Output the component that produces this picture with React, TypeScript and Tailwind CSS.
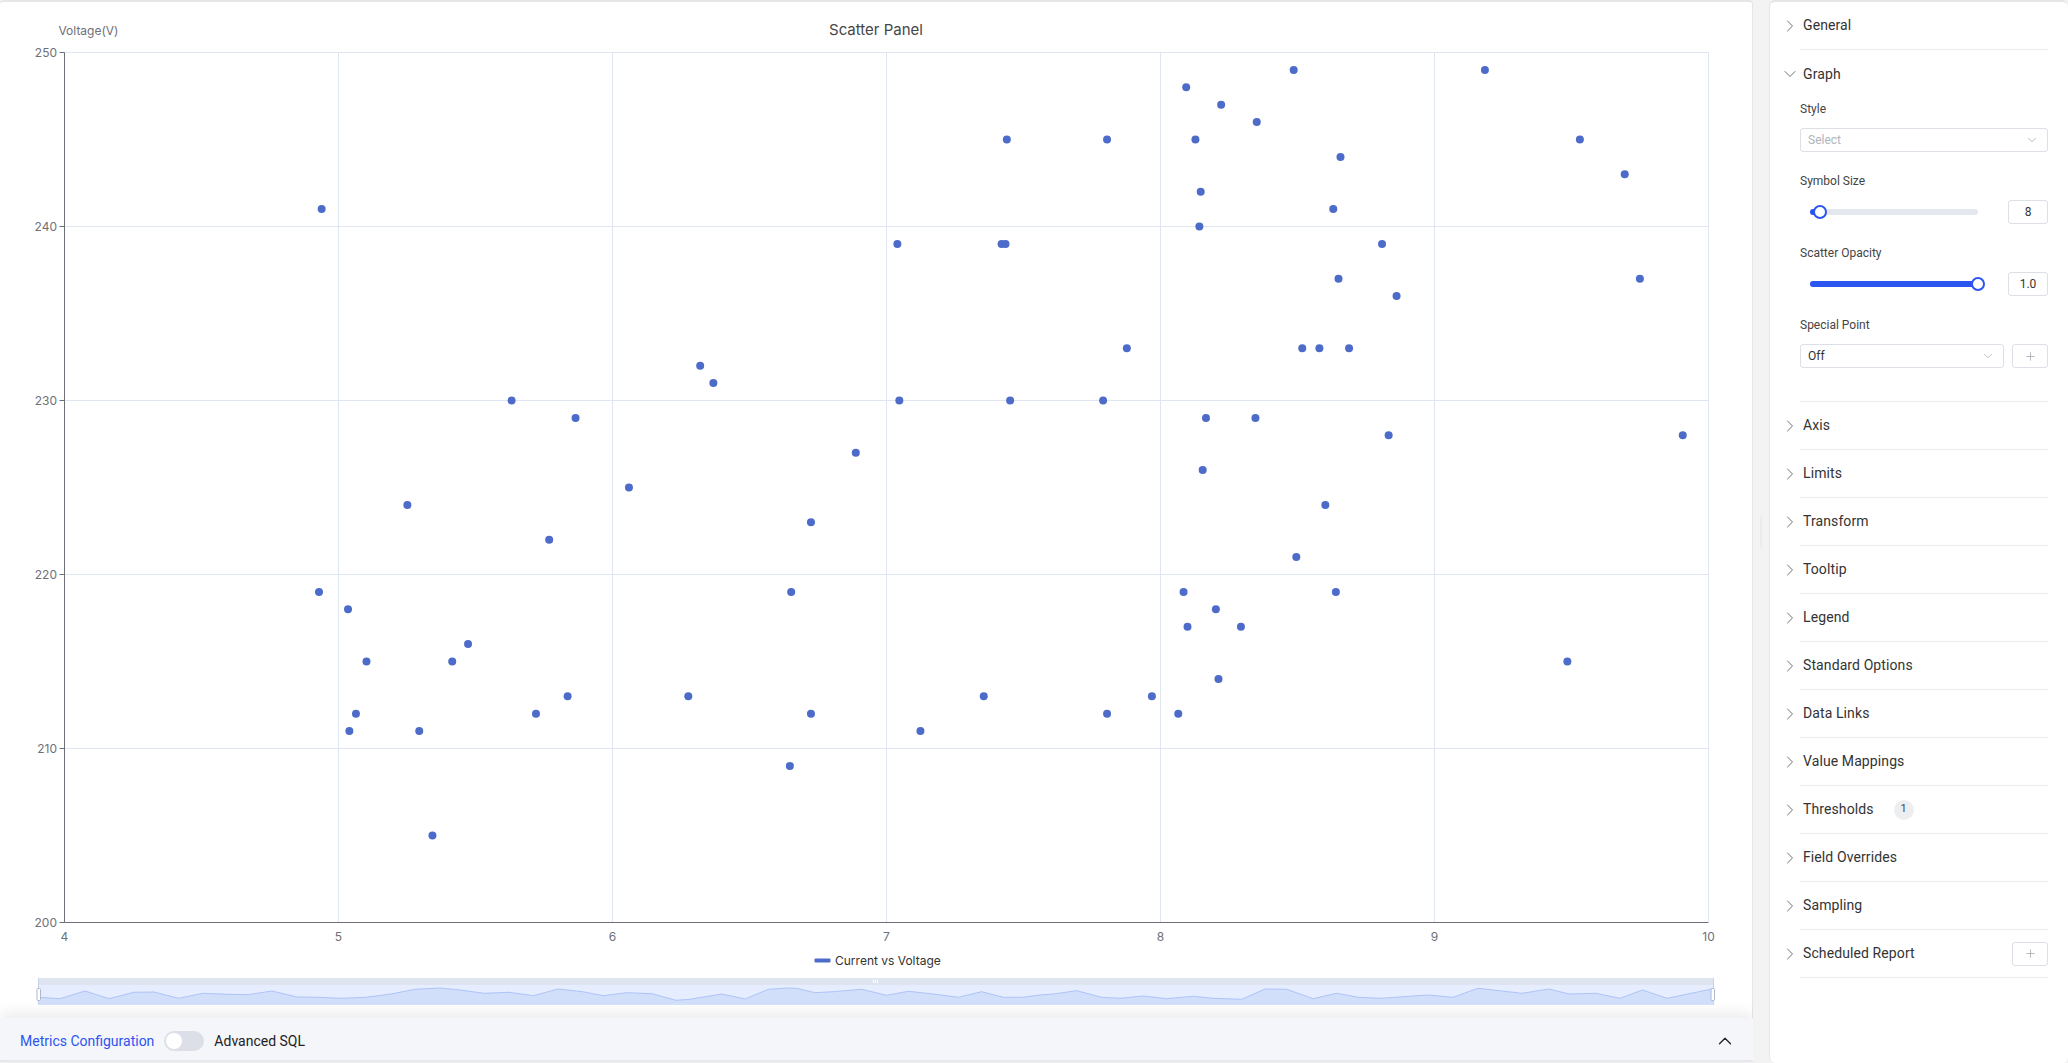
import { ChevronRight, ChevronDown, ChevronUp, Plus } from "lucide-react";

const points: [number, number][] = [
  [243.5,241],[241.5,219],[263.5,218],[277.5,215],[269.5,212],[264.5,211],[317.5,211],[327.5,205],[308.5,224],[342.5,215],
  [354.5,216],[387.5,230],[436,229],[416,222],[406,212],[430,213],[476.5,225],[530.5,232],[540.5,231],[521.5,213],
  [598.5,209],[599.5,219],[614.5,223],[614.5,212],[648.5,227],[680,239],[681.5,230],[697.5,211],[745.5,213],[759,239],
  [762,239],[763,245],[765.5,230],[839,245],[836,230],[839,212],[854,233],[873,213],[893,212],[897,219],
  [900,217],[899,248],[906,245],[925.5,247],[952.5,246],[910,242],[909,240],[914,229],[911.5,226],[921.5,218],
  [940.5,217],[923.5,214],[951.5,229],[980.5,249],[1016,244],[1010.5,241],[1047.5,239],[1014.5,237],[1058.5,236],[987,233],
  [1000,233],[1022.5,233],[1052.5,228],[1004.5,224],[982.5,221],[1012.5,219],[1125.5,249],[1197.5,245],[1231.5,243],[1243,237],
  [1275.5,228],[1188,215],
];

const miniLine =
  "39,997.3 60,998.7 85,991 109,998.7 134,992.3 154,992 178.6,998.3 203,993.3 228,994.3 248,994.7 272,991 297,997 317,997.3 341.5,998.3 366,997.3 391,994 415,989.3 440,988 460,990 484,993.3 509,992.3 533.5,995.7 558,989 582.6,991.7 603,995.7 627,992.7 652,993.7 676,1000.3 690,999.3 721.7,994 745,999 768.3,989.3 786.7,988 796.7,988.3 815,992.7 833.3,991.7 861.7,989.3 886.7,995.3 908.3,991.3 933.3,994 958.3,997.3 981.7,991.7 1003.3,997.3 1023.3,997.3 1040,995 1053.3,994 1076.7,990.7 1101.7,997.3 1120,998.3 1143.3,996 1166.7,998.7 1193.3,996.3 1213.3,998.3 1241.7,999.3 1265,989 1286.7,989.3 1313.3,998.7 1336.7,993.3 1358.3,997.3 1381,998.3 1428,995 1453,997.3 1478,988.3 1522,993.3 1549,989 1569,994 1596,993.3 1620,998.3 1642.5,990 1667,998.3 1712,989";

const L = 64.5;
const R = 1708.5;
const T = 52.5;
const B = 922.5;
const xTicks = [4, 5, 6, 7, 8, 9, 10];
const yTicks = [200, 210, 220, 230, 240, 250];
const xPos = (v: number) => L + ((v - 4) * (R - L)) / 6;
const yPos = (v: number) => B - (v - 200) * 17.4;
const crisp = (n: number) => Math.floor(n) + 0.5;

function Chart() {
  return (
    <svg viewBox="0 2 1752 1016" className="block w-[1752px] h-[1016px] [font-family:Inter,sans-serif]">
      <text x="118.5" y="35" textAnchor="end" className="text-[12px] fill-[#6e7079]">Voltage(V)</text>
      <text x="876" y="35" textAnchor="middle" className="text-[15px] fill-[#464646]">Scatter Panel</text>
      {xTicks.slice(1).map((v) => (
        <line key={v} x1={crisp(xPos(v))} x2={crisp(xPos(v))} y1={T} y2={B} stroke="#e0e6f1" strokeWidth="1" />
      ))}
      {yTicks.slice(1).map((v) => (
        <line key={v} x1={L} x2={R} y1={crisp(yPos(v))} y2={crisp(yPos(v))} stroke="#e0e6f1" strokeWidth="1" />
      ))}
      <line x1={L} x2={L} y1={T} y2={B} stroke="#6e7079" strokeWidth="1" />
      <line x1={L} x2={R} y1={B} y2={B} stroke="#6e7079" strokeWidth="1" />
      {yTicks.map((v) => (
        <g key={v}>
          <line x1={L - 5} x2={L} y1={crisp(yPos(v))} y2={crisp(yPos(v))} stroke="#6e7079" strokeWidth="1" />
          <text x={57} y={yPos(v) + 4.5} textAnchor="end" className="text-[12px] fill-[#6e7079]">{v}</text>
        </g>
      ))}
      {xTicks.map((v) => (
        <text key={v} x={xPos(v)} y={941} textAnchor="middle" className="text-[12px] fill-[#6e7079]">{v}</text>
      ))}
      {points.map(([x, v], i) => (
        <circle key={i} cx={x * 1.3189 + 0.5} cy={yPos(v)} r="4" fill="#4d6cc9" />
      ))}
      <rect x="814.5" y="958.5" width="16" height="4" rx="1" fill="#4d6cc9" />
      <text x="835" y="965" className="text-[12px] fill-[#333333]">Current vs Voltage</text>
      <rect x="38" y="978" width="1676" height="8" rx="2" fill="#dfe4f1" />
      <rect x="38" y="985" width="1676" height="19.7" fill="#e5edfe" />
      <polygon points={`38,1004.7 ${miniLine} 1714,1004.7`} fill="#d2dffa" />
      <polyline points={miniLine} fill="none" stroke="#aec4f8" strokeWidth="1" />
      <line x1="38.5" x2="38.5" y1="978" y2="1004.7" stroke="#c6d1ea" />
      <line x1="1713.5" x2="1713.5" y1="978" y2="1004.7" stroke="#c6d1ea" />
      <rect x="37" y="988.5" width="3.5" height="12" rx="1" fill="#ffffff" stroke="#acb8d1" />
      <rect x="1711" y="988.5" width="3.5" height="12" rx="1" fill="#ffffff" stroke="#acb8d1" />
      <path d="M873.5 979.5v3.5M875.5 979.5v3.5M877.5 979.5v3.5" stroke="#ffffff" strokeWidth="1" />
    </svg>
  );
}

function BottomBar() {
  return (
    <div className="relative z-10 flex h-[44px] items-center border-b-2 border-[#e7e8ec] bg-[#f5f6fa] pl-5 pr-[17px] pt-1 shadow-[0_-5px_14px_rgba(0,0,0,0.08)]">
      <span className="text-[14px] text-[#2b55ef]">Metrics Configuration</span>
      <div className="ml-[10px] flex h-5 w-10 items-center rounded-full bg-[#dcdfe7] pl-0.5">
        <div className="h-4 w-4 rounded-full bg-white" />
      </div>
      <span className="ml-[10px] text-[14px] text-[#222222]">Advanced SQL</span>
      <ChevronUp size={22} strokeWidth={1.4} className="ml-auto text-[#222222]" />
    </div>
  );
}

function PlusButton() {
  return (
    <div className="flex h-6 w-9 items-center justify-center rounded-[3px] border border-[#dcdfe6]">
      <Plus size={13} strokeWidth={1.5} className="text-[#a8abb2]" />
    </div>
  );
}

function Row({ label, badge, action }: { label: string; badge?: string; action?: boolean }) {
  return (
    <div className="flex">
      <div className="flex h-12 w-[30px] items-center justify-center pl-[10px]">
        <ChevronRight size={20} strokeWidth={1} className="text-[#555555]" />
      </div>
      <div className="flex h-12 flex-1 items-center border-b border-[#ebecef] pl-[3px]">
        <span className="text-[14px] tracking-[0.1px] text-[#333333]">{label}</span>
        {badge && (
          <span className="ml-[20px] flex h-5 w-5 items-center justify-center rounded-full bg-[#edeef2] text-[11px] text-[#444444]">{badge}</span>
        )}
        {action && (
          <div className="ml-auto">
            <PlusButton />
          </div>
        )}
      </div>
    </div>
  );
}

function Label({ children, className }: { children: string; className: string }) {
  return <div className={`text-[12px] leading-4 text-[#444444] ${className}`}>{children}</div>;
}

function Slider({ fill }: { fill: string }) {
  return (
    <div className="flex items-center">
      <div className="ml-[10px] flex h-1.5 w-[168px] items-center rounded-full bg-[#e5e7ee]">
        <div className={`flex h-1.5 items-center justify-end rounded-full bg-[#2b55ef] ${fill}`}>
          <div className="-mr-[7px] h-[14px] w-[14px] shrink-0 rounded-full border-2 border-[#2b55ef] bg-white" />
        </div>
      </div>
      <div className="ml-auto flex h-6 w-10 items-center justify-center rounded-[3px] border border-[#dcdfe6] text-[12px] text-[#333333]">
        {fill === "w-[10px]" ? "8" : "1.0"}
      </div>
    </div>
  );
}

function Select({ text, muted, className }: { text: string; muted?: boolean; className: string }) {
  return (
    <div className={`flex h-6 items-center rounded-[3px] border border-[#dcdfe6] pl-[7px] pr-[8px] ${className}`}>
      <span className={`text-[12px] ${muted ? "text-[#b0b4bd]" : "text-[#333333]"}`}>{text}</span>
      <ChevronDown size={14} strokeWidth={1} className="ml-auto text-[#8b8f98]" />
    </div>
  );
}

function GraphSection() {
  return (
    <div>
      <div className="flex h-12 items-center">
        <div className="flex w-[30px] justify-center pl-[10px]">
          <ChevronDown size={20} strokeWidth={1} className="text-[#555555]" />
        </div>
        <span className="pl-[3px] text-[14px] tracking-[0.1px] text-[#333333]">Graph</span>
      </div>
      <div className="ml-[30px] h-[304px] border-b border-[#ebecef] pt-[3px]">
        <Label className="">Style</Label>
        <Select text="Select" muted className="mt-[11px] w-full" />
        <Label className="mt-[21px]">Symbol Size</Label>
        <div className="mt-[11px]">
          <Slider fill="w-[10px]" />
        </div>
        <Label className="mt-[21px]">Scatter Opacity</Label>
        <div className="mt-[11px]">
          <Slider fill="w-full" />
        </div>
        <Label className="mt-[21px]">Special Point</Label>
        <div className="mt-[11px] flex justify-between">
          <Select text="Off" className="w-[204px]" />
          <PlusButton />
        </div>
      </div>
    </div>
  );
}

export default function App() {
  const rows = ["Axis", "Limits", "Transform", "Tooltip", "Legend", "Standard Options", "Data Links", "Value Mappings"];
  return (
    <div className="flex h-[1063px] w-[2068px] overflow-hidden bg-[#f3f3f3] [font-family:Roboto,sans-serif]">
      <div className="flex w-[1753px] shrink-0 flex-col overflow-hidden">
        <div className="flex-none overflow-hidden rounded-t-[4px] border-t-2 border-r border-[#e6e6e6] bg-white">
          <Chart />
        </div>
        <BottomBar />
      </div>
      <div className="flex w-4 shrink-0 items-start justify-center pt-[516px]">
        <div className="h-8 w-0.5 rounded bg-[#ececec]" />
      </div>
      <div className="flex-1 rounded-[6px] border-t-2 border-l border-[#e6e6e6] bg-white pr-5">
        <Row label="General" />
        <GraphSection />
        {rows.map((r) => (
          <Row key={r} label={r} />
        ))}
        <Row label="Thresholds" badge="1" />
        <Row label="Field Overrides" />
        <Row label="Sampling" />
        <Row label="Scheduled Report" action />
      </div>
    </div>
  );
}
